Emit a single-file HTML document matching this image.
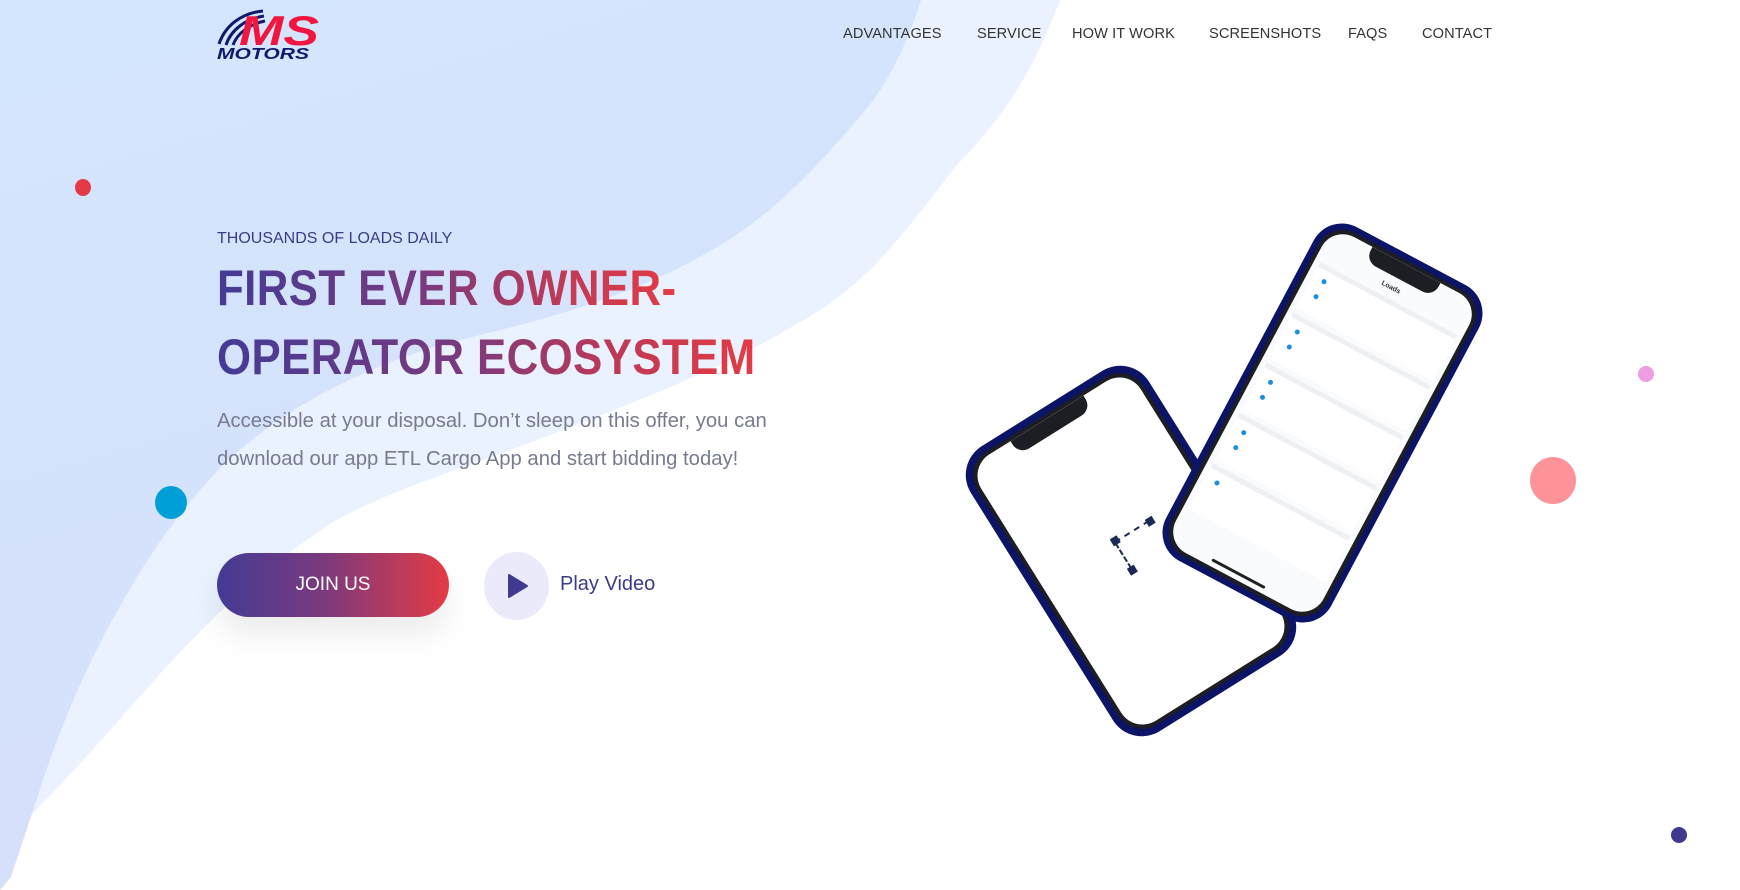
<!DOCTYPE html>
<html><head><meta charset="utf-8"><style>
*{margin:0;padding:0;box-sizing:border-box}
body{width:1740px;height:890px;overflow:hidden;background:#fff;font-family:"Liberation Sans",sans-serif;position:relative}
.abs{position:absolute}
.nav{position:absolute;top:26px;font-size:14.6px;color:#333;white-space:nowrap;letter-spacing:0.1px}
.dot{position:absolute;border-radius:50%}
h1{position:absolute;left:217px;font-size:50px;font-weight:bold;white-space:nowrap;line-height:1;
background:linear-gradient(90deg,#433b95 0%,#7a3a7e 45%,#c03a55 75%,#e43b44 100%);-webkit-background-clip:text;background-clip:text;color:transparent;letter-spacing:0.5px;transform:scaleX(0.875);transform-origin:left}
</style></head><body>
<svg class="abs" style="left:0;top:0" width="1740" height="890">
<defs><linearGradient id="dg" x1="0" y1="0" x2="0.3" y2="1"><stop offset="0" stop-color="#d3e6fd"/><stop offset="1" stop-color="#d7dffb"/></linearGradient></defs>
<path d="M1060,0 C1030,80 1000,120 955,167 C900,240 860,290 800,322 C720,370 640,400 555,433 C460,470 390,490 333,522 C260,570 220,610 167,666 C110,730 50,800 0,844 L0,0 Z" fill="#e9f2fe"/>
<path d="M921,0 C905,50 885,90 855,122 C810,175 770,215 722,244 C630,300 540,320 444,344 C340,375 270,420 222,466 C170,520 140,570 111,622 C80,680 60,730 44,777 C30,820 20,850 11,877 L0,890 L0,0 Z" fill="url(#dg)"/>
</svg>
<!-- logo -->
<svg class="abs" style="left:215px;top:8px" width="110" height="56" viewBox="0 0 110 56">
<path d="M4,36 C10,18 26,5 48,3" stroke="#0e1a6b" stroke-width="3" fill="none"/>
<path d="M11,37 C16,22 30,11 49,8" stroke="#0e1a6b" stroke-width="3" fill="none"/>
<path d="M18,37 C22,26 34,16 50,13" stroke="#0e1a6b" stroke-width="3" fill="none"/>
<text x="24" y="37" font-family="Liberation Sans" font-weight="bold" font-style="italic" font-size="42" fill="#f0163f" textLength="80" lengthAdjust="spacingAndGlyphs">MS</text>
<text x="2" y="51" font-family="Liberation Sans" font-weight="bold" font-style="italic" font-size="16" fill="#0e1a6b" textLength="92" lengthAdjust="spacingAndGlyphs">MOTORS</text>
</svg>
<span class="nav" style="left:843px">ADVANTAGES</span>
<span class="nav" style="left:977px">SERVICE</span>
<span class="nav" style="left:1072px">HOW IT WORK</span>
<span class="nav" style="left:1209px">SCREENSHOTS</span>
<span class="nav" style="left:1348px">FAQS</span>
<span class="nav" style="left:1422px">CONTACT</span>

<div class="dot" style="left:75px;top:179px;width:16px;height:17px;background:#e63946"></div>
<div class="dot" style="left:155px;top:486px;width:32px;height:33px;background:#009fd8"></div>
<div class="dot" style="left:1638px;top:366px;width:16px;height:16px;background:#ef9ce3"></div>
<div class="dot" style="left:1530px;top:457px;width:46px;height:47px;background:#fd9398"></div>
<div class="dot" style="left:1671px;top:827px;width:16px;height:16px;background:#3f3a8f"></div>

<div class="abs" style="left:217px;top:230px;font-size:16px;color:#3c3b86;white-space:nowrap">THOUSANDS OF LOADS DAILY</div>
<h1 style="top:263px">FIRST EVER OWNER-</h1>
<h1 style="top:332px">OPERATOR ECOSYSTEM</h1>
<div class="abs" style="left:217px;top:402px;font-size:20.3px;color:#767b8f;line-height:38px;white-space:nowrap">Accessible at your disposal. Don’t sleep on this offer, you can<br>download our app ETL Cargo App and start bidding today!</div>

<div class="abs" style="left:217px;top:553px;width:232px;height:64px;border-radius:32px;background:linear-gradient(90deg,#433b95,#7a3a7e 45%,#e43b44);box-shadow:0 18px 30px rgba(0,0,0,0.08);color:#fff;font-size:19px;text-align:center;line-height:64px">JOIN US</div>
<div class="dot" style="left:484px;top:552px;width:65px;height:68px;background:#ebeafb"></div>
<svg class="abs" style="left:507px;top:573px" width="22" height="26"><path d="M2,2 L20,13 L2,24 Z" fill="#3f3a8f" stroke="#3f3a8f" stroke-width="2" stroke-linejoin="round"/></svg>
<div class="abs" style="left:560px;top:573px;font-size:20px;color:#3d3a8c">Play Video</div>

<!-- back phone -->
<div class="abs" style="left:1026px;top:383px;width:210px;height:336px;transform:rotate(-32deg);border-radius:34px;background:#0b1466;padding:7px">
 <div style="width:100%;height:100%;border-radius:28px;background:#1d1d24;padding:4px">
  <div style="width:100%;height:100%;border-radius:25px;background:#fff;position:relative;overflow:hidden">
   <div style="position:absolute;left:50px;top:0;width:86px;height:16px;background:#1d1d24;border-radius:0 0 12px 12px"></div>
   <div style="position:absolute;left:85px;top:140px;width:40px;height:2px;border-top:2px dashed #1a2a55"></div>
   <div style="position:absolute;left:82px;top:136px;width:8px;height:8px;background:#1a2a55"></div>
   <div style="position:absolute;left:122px;top:138px;width:8px;height:8px;background:#1a2a55"></div>
   <div style="position:absolute;left:84px;top:142px;width:2px;height:30px;border-left:2px dashed #1a2a55"></div>
   <div style="position:absolute;left:81px;top:170px;width:8px;height:8px;background:#1a2a55"></div>
  </div>
 </div>
</div>
<!-- front phone -->
<div class="abs" style="left:1229px;top:234px;width:187px;height:378px;transform:rotate(28deg);border-radius:32px;background:#0b1466;padding:6px">
 <div style="width:100%;height:100%;border-radius:27px;background:#1d1d24;padding:4px">
  <div style="width:100%;height:100%;border-radius:24px;background:#fafbfc;position:relative;overflow:hidden">
   <div style="position:absolute;left:45px;top:0;width:77px;height:16px;background:#1d1d24;border-radius:0 0 12px 12px"></div>
   <div style="position:absolute;left:70px;top:24px;font-size:7px;font-weight:bold;color:#333">Loads</div>
   <div style="position:absolute;left:6px;top:38px;width:155px;height:52px;background:#fff;border-top:5px solid #eef0f3"><div style="margin:8px 0 0 10px;width:5px;height:5px;border-radius:50%;background:#1a8fe0"></div><div style="margin:12px 0 0 10px;width:5px;height:5px;border-radius:50%;background:#1a8fe0"></div></div>
   <div style="position:absolute;left:6px;top:95px;width:155px;height:52px;background:#fff;border-top:5px solid #eef0f3"><div style="margin:8px 0 0 10px;width:5px;height:5px;border-radius:50%;background:#1a8fe0"></div><div style="margin:12px 0 0 10px;width:5px;height:5px;border-radius:50%;background:#1a8fe0"></div></div>
   <div style="position:absolute;left:6px;top:152px;width:155px;height:52px;background:#fff;border-top:5px solid #eef0f3"><div style="margin:8px 0 0 10px;width:5px;height:5px;border-radius:50%;background:#1a8fe0"></div><div style="margin:12px 0 0 10px;width:5px;height:5px;border-radius:50%;background:#1a8fe0"></div></div>
   <div style="position:absolute;left:6px;top:209px;width:155px;height:52px;background:#fff;border-top:5px solid #eef0f3"><div style="margin:8px 0 0 10px;width:5px;height:5px;border-radius:50%;background:#1a8fe0"></div><div style="margin:12px 0 0 10px;width:5px;height:5px;border-radius:50%;background:#1a8fe0"></div></div>
   <div style="position:absolute;left:6px;top:266px;width:155px;height:52px;background:#fff;border-top:5px solid #eef0f3"><div style="margin:8px 0 0 10px;width:5px;height:5px;border-radius:50%;background:#1a8fe0"></div></div>
   <div style="position:absolute;left:50px;top:350px;width:60px;height:3px;background:#222;border-radius:2px"></div>
  </div>
 </div>
</div>
</body></html>
